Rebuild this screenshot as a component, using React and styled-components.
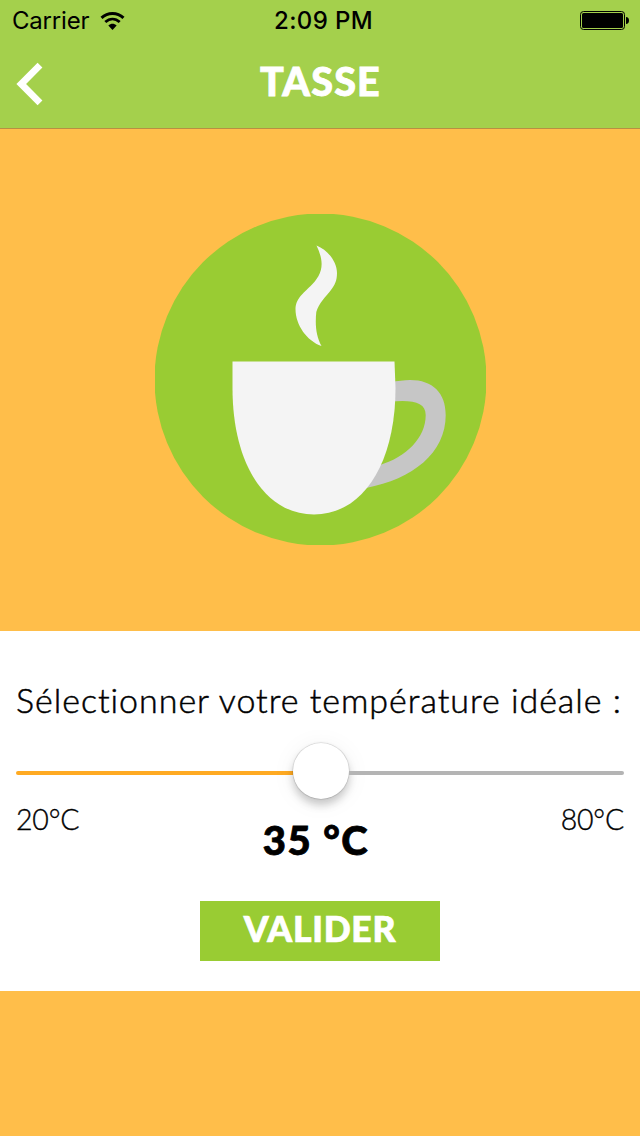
import React, { useState } from 'react';
import styled, { createGlobalStyle } from 'styled-components';

const GlobalStyle = createGlobalStyle`
  *, *::before, *::after { box-sizing: border-box; }
  body { margin: 0; background: #ffbe4a; }
`;

const Screen = styled.div`
  width: 640px;
  height: 1136px;
  display: flex;
  flex-direction: column;
  overflow: hidden;
  background: #ffbe4a;
  color: #000;
  font-family: Lato, "Open Sans", sans-serif;
`;

const Header = styled.header`
  height: 129px;
  flex: none;
  background: #a4d04c;
  border-bottom: 1px solid #b88f42;
`;

const StatusBar = styled.div`
  height: 40px;
  padding: 0 11px 0 12px;
  display: grid;
  grid-template-columns: 1fr auto 1fr;
  align-items: center;
  font: 400 24px/40px Inter, "Liberation Sans", sans-serif;
`;

const Network = styled.div`
  display: flex;
  align-items: center;
  gap: 11px;
  padding-top: 1px;
  letter-spacing: -0.2px;
`;

const Clock = styled.div`
  padding: 1px 0 0 6px;
  font-weight: 500;
  font-size: 24px;
  letter-spacing: 0.35px;
`;

const BatterySlot = styled.div`
  display: flex;
  justify-content: flex-end;
`;

const NavBar = styled.nav`
  height: 88px;
  display: grid;
  grid-template-columns: 60px 1fr 60px;
  align-items: start;
`;

const BackButton = styled.button`
  height: 88px;
  padding: 22px 0 0 16px;
  border: 0;
  background: none;
  display: flex;
  align-items: flex-start;
`;

const Title = styled.h1`
  margin: 0;
  padding: 17px 0 0 1px;
  text-align: center;
  color: #fff;
  font-weight: 900;
  font-size: 39.5px;
  line-height: 48px;
  letter-spacing: 1.2px;
  -webkit-text-stroke: 0.8px #fff;
`;

const Hero = styled.section`
  height: 502px;
  flex: none;
  padding: 85px 0 0 155px;
`;

const Panel = styled.main`
  height: 360px;
  flex: none;
  padding: 47px 16px 0;
  background: #fff;
  display: flex;
  flex-direction: column;
`;

const Prompt = styled.label`
  height: 44px;
  font-weight: 300;
  font-size: 34px;
  line-height: 44px;
  letter-spacing: 0.98px;
  white-space: nowrap;
  -webkit-text-stroke: 0.5px #000;
`;

const Slider = styled.div`
  height: 57px;
  margin-top: 20px;
  display: flex;
  align-items: center;
`;

const Track = styled.div`
  height: 4px;
  margin-top: 4px;
  flex: ${({ $grow }) => $grow} 1 0;
  border-radius: ${({ $end }) => ($end ? '0 2px 2px 0' : '2px 0 0 2px')};
  background: ${({ $end }) => ($end ? '#b4b4b4' : '#ffaa22')};
`;

const Thumb = styled.div`
  width: 56px;
  height: 56px;
  flex: none;
  border-radius: 50%;
  background: #fff;
  box-shadow: 0 0 1px 0.5px rgba(0, 0, 0, 0.18), 0 6px 9px rgba(0, 0, 0, 0.2),
    0 3px 26px rgba(0, 0, 0, 0.06);
`;

const Readout = styled.div`
  height: 86px;
  display: grid;
  grid-template-columns: 1fr auto 1fr;
`;

const Limit = styled.span`
  margin-top: 3px;
  font-weight: 300;
  font-size: 28.5px;
  line-height: 34px;
  letter-spacing: -0.2px;
  text-align: ${({ $align }) => $align};
  -webkit-text-stroke: 0.35px #000;
`;

const Value = styled.output`
  margin: 17px 8px 0 0;
  font-weight: 900;
  font-size: 40px;
  line-height: 48px;
  letter-spacing: 1.5px;
  -webkit-text-stroke: 0.8px #000;
`;

const Submit = styled.button`
  width: 240px;
  height: 60px;
  margin: 16px auto 0;
  padding: 0 0 5px;
  border: 0;
  background: #9c3;
  color: #fff;
  font: 900 35.5px/55px Lato, sans-serif;
  letter-spacing: 0.7px;
  -webkit-text-stroke: 0.7px #fff;
`;

function WifiIcon() {
  return (
    <svg width="25" height="18" viewBox="0 0 26 19" aria-hidden="true">
      <path d="M1.4 6.2C8 .1 18 .1 24.6 6.2" fill="none" stroke="#000" strokeWidth="3.2" />
      <path d="M5.4 10.6C10 6.4 16 6.4 20.6 10.6" fill="none" stroke="#000" strokeWidth="3" />
      <path d="M8.6 14.2C11.4 11.7 14.6 11.7 17.4 14.2L13 19Z" />
    </svg>
  );
}

function BatteryIcon() {
  return (
    <svg width="49" height="19" viewBox="0 0 49 19" aria-hidden="true">
      <rect x=".5" y=".5" width="44" height="18" rx="3" fill="none" stroke="#000" />
      <rect x="2" y="2" width="41" height="15" rx="1.5" />
      <path d="M46 6C48 6 49 7.5 49 9.5S48 13 46 13Z" />
    </svg>
  );
}

function BackIcon() {
  return (
    <svg width="28" height="44" viewBox="0 0 28 44" aria-hidden="true">
      <path d="M24 3.1L5.2 22L24 40.9" fill="none" stroke="#fff" strokeWidth="6.8" />
    </svg>
  );
}

function CupIllustration() {
  return (
    <svg width="331" height="331" viewBox="155 214 331 331" role="img" aria-label="Tasse">
      <circle cx="320.5" cy="379.5" r="166" fill="#9c3" />
      <path
        d="M390 382C398 381 404 380 410 380C433 380 445.7 393 445.7 415C445.7 453 413 479 366 488L380 465C406 457 425.7 438 425.7 415C425.7 402 413 399.5 390 401.5Z"
        fill="#c6c6c6"
      />
      <path
        d="M232.5 361.5H394.5L395.5 388C395.5 465 362 514.5 314 514.5C266 514.5 232.5 465 232.5 388Z"
        fill="#f4f4f4"
      />
      <path
        d="M316.5 245.5C328 250 337 262 337 273C337 281 334.5 285.5 331 290C326 296.5 318.5 303.5 316.3 312C315 325 316 336 321.5 346C307 341 295.5 325 295.5 309C295.5 303.5 298 298.5 302 294.5C307.5 288.5 314 284 318.5 276C324 266 321.5 256 316.5 245.5Z"
        fill="#f4f4f4"
      />
    </svg>
  );
}

export default function App() {
  const [temperature] = useState(35);

  return (
    <>
      <GlobalStyle />
      <Screen>
        <Header>
          <StatusBar>
            <Network>
              Carrier
              <WifiIcon />
            </Network>
            <Clock>2:09 PM</Clock>
            <BatterySlot>
              <BatteryIcon />
            </BatterySlot>
          </StatusBar>
          <NavBar>
            <BackButton aria-label="Retour">
              <BackIcon />
            </BackButton>
            <Title>TASSE</Title>
          </NavBar>
        </Header>
        <Hero>
          <CupIllustration />
        </Hero>
        <Panel>
          <Prompt>Sélectionner votre température idéale :</Prompt>
          <Slider>
            <Track $grow={277} />
            <Thumb />
            <Track $grow={275} $end />
          </Slider>
          <Readout>
            <Limit $align="left">20°C</Limit>
            <Value>{temperature} °C</Value>
            <Limit $align="right">80°C</Limit>
          </Readout>
          <Submit>VALIDER</Submit>
        </Panel>
      </Screen>
    </>
  );
}
